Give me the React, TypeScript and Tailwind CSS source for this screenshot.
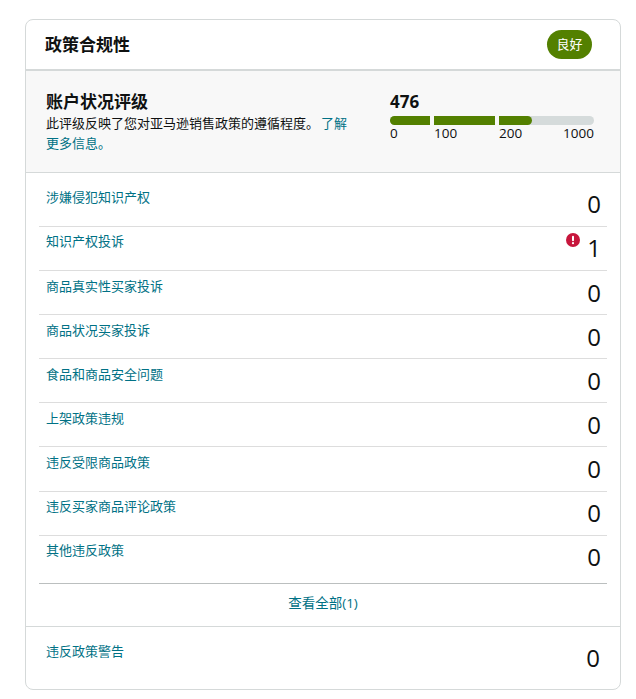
const rows = [
  { label: "涉嫌侵犯知识产权", value: 0, cls: "h-[54px]", pad: "pt-[15px]", num: "pt-[15px]" },
  { label: "知识产权投诉", value: 1, alert: true, cls: "h-[44px]", pad: "pt-[5px]", num: "pt-[5px]" },
  { label: "商品真实性买家投诉", value: 0, cls: "h-[44px]", pad: "pt-[6px]", num: "pt-[6px]" },
  { label: "商品状况买家投诉", value: 0, cls: "h-[44px]", pad: "pt-[6px]", num: "pt-[6px]" },
  { label: "食品和商品安全问题", value: 0, cls: "h-[44px]", pad: "pt-[6px]", num: "pt-[6px]" },
  { label: "上架政策违规", value: 0, cls: "h-[44px]", pad: "pt-[6px]", num: "pt-[6px]" },
  { label: "违反受限商品政策", value: 0, cls: "h-[45px]", pad: "pt-[6px]", num: "pt-[6px]" },
  { label: "违反买家商品评论政策", value: 0, cls: "h-[44px]", pad: "pt-[5px]", num: "pt-[5px]" },
  { label: "其他违反政策", value: 0, cls: "h-[48px]", pad: "pt-[5px]", num: "pt-[5px]" },
];

function AlertIcon() {
  return (
    <svg width="14" height="14" viewBox="0 0 14 14">
      <circle cx="7" cy="7" r="7" fill="#c7163c" />
      <rect x="6" y="2.8" width="2" height="5.4" rx="1" fill="#fff" />
      <circle cx="7" cy="10.2" r="1.1" fill="#fff" />
    </svg>
  );
}

export default function App() {
  return (
    <div className="w-[636px] h-[699px] bg-white pt-[19px] pl-[25px] font-['Open_Sans','Noto_Sans_CJK_SC',sans-serif] text-[#0f1111]">
      <div className="w-[596px] h-[671px] rounded-[8px] border border-[#d5d9d9] flex flex-col overflow-hidden">
        <div className="h-[51px] shrink-0 flex items-center justify-between border-b-2 border-[#d5d9d9] pl-[19px] pr-[28px]">
          <h1 className="text-[17px] font-bold leading-[24px]">政策合规性</h1>
          <span className="w-[45px] h-[29px] rounded-full bg-[#538000] text-white text-[13px] leading-[29px] text-center">良好</span>
        </div>

        <div className="h-[102px] shrink-0 bg-[#f8f8f8] border-b border-[#d5d9d9] flex pl-[20px] pt-[20px]">
          <div className="w-[310px]">
            <h2 className="text-[17px] font-bold leading-[22px]">账户状况评级</h2>
            <p className="text-[13px] leading-[20px]">
              此评级反映了您对亚马逊销售政策的遵循程度。<span className="ml-[2px] text-[#007185]">了解更多信息。</span>
            </p>
          </div>
          <div className="ml-[34px] w-[204px]">
            <div className="text-[17px] font-bold leading-[22px]">476</div>
            <div className="h-[9px] mt-[3px] rounded-full bg-[#d5dbdb] overflow-hidden">
              <div className="flex h-full w-[142px]">
                <div className="w-[40px] bg-[#538000]" />
                <div className="w-[4px] bg-[#f8f8f8]" />
                <div className="w-[61px] bg-[#538000]" />
                <div className="w-[4px] bg-[#f8f8f8]" />
                <div className="w-[33px] bg-[#538000] rounded-r-full" />
              </div>
            </div>
            <div className="flex text-[13.5px] leading-[16px]">
              <span className="w-[44px]">0</span>
              <span className="w-[65px]">100</span>
              <span className="w-[64px]">200</span>
              <span>1000</span>
            </div>
          </div>
        </div>

        <div className="px-[13px] flex flex-col">
          {rows.map((r, i) => (
            <div key={r.label} className={`${r.cls} flex justify-between pl-[7px] pr-[6px] ${i < rows.length - 1 ? "border-b border-[#dddddd]" : "border-b border-[#bbbfbf]"}`}>
              <span className={`text-[13px] leading-[18px] text-[#007185] ${r.pad}`}>{r.label}</span>
              <div className="flex items-start gap-[7px]">
                {r.alert && <span className="pt-[6px]"><AlertIcon /></span>}
                <span className={`text-[24px] leading-[32px] ${r.num}`}>{r.value}</span>
              </div>
            </div>
          ))}
          <div className="h-[42px] flex items-center justify-center pb-[3px] text-[13.5px] text-[#007185]">查看全部(1)</div>
        </div>

        <div className="border-t border-[#d5d9d9] flex-1 flex justify-between pl-[20px] pr-[20px]">
          <span className="text-[13px] leading-[18px] text-[#007185] pt-[15px]">违反政策警告</span>
          <span className="text-[24px] leading-[32px] pt-[15px]">0</span>
        </div>
      </div>
    </div>
  );
}
